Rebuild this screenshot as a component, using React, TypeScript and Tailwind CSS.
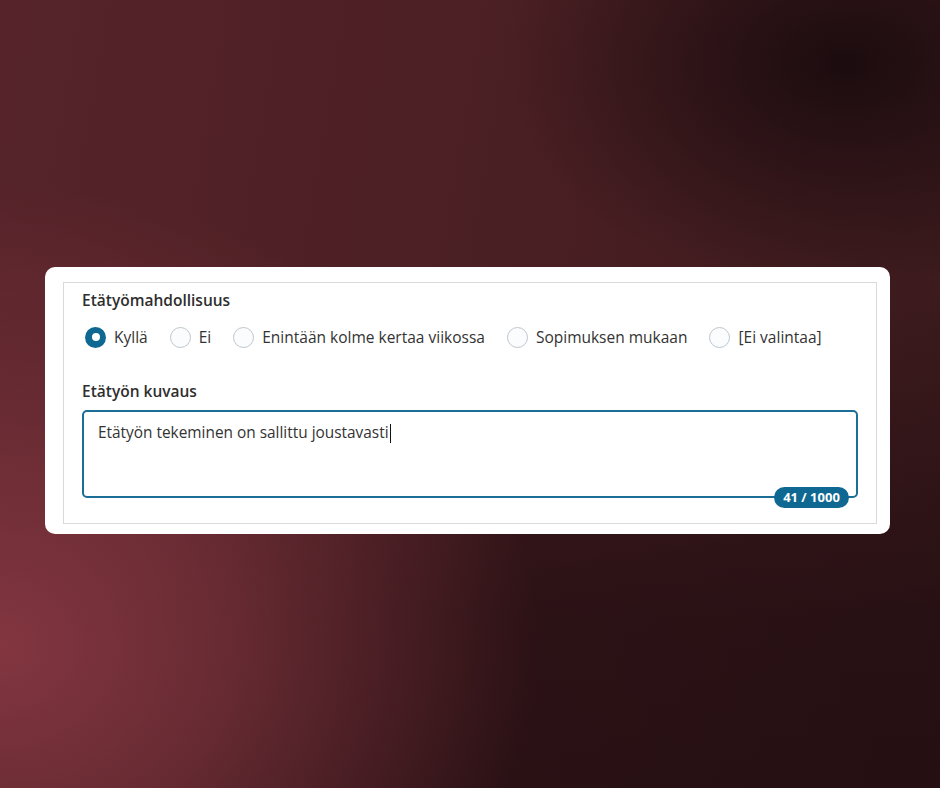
import React from "react";

const options = [
  { label: "Kyllä", checked: true },
  { label: "Ei", checked: false },
  { label: "Enintään kolme kertaa viikossa", checked: false },
  { label: "Sopimuksen mukaan", checked: false },
  { label: "[Ei valintaa]", checked: false },
];

function Radio({ checked }: { checked: boolean }) {
  if (checked) {
    return (
      <span className="flex h-[21px] w-[21px] shrink-0 items-center justify-center rounded-full bg-[#0f6891]">
        <span className="h-[8px] w-[8px] rounded-full bg-white" />
      </span>
    );
  }
  return (
    <span className="h-[21px] w-[21px] shrink-0 rounded-full border border-[#bcc6ce] bg-[#fbfcfd]" />
  );
}

export default function App() {
  return (
    <div
      className="h-[788px] w-[940px] overflow-hidden pl-[45px] pt-[267px] bg-[radial-gradient(ellipse_540px_460px_at_0%_82%,#833640_0%,rgba(131,54,64,0.7)_40%,transparent_100%),radial-gradient(ellipse_340px_230px_at_90%_8%,#1c0c0f_0%,transparent_100%),linear-gradient(to_bottom,transparent_35%,rgba(28,11,14,0.65)_78%,rgba(28,11,14,0.7)_100%),linear-gradient(100deg,#56232a_0%,#4a1f23_50%,#3b1a1d_100%)]"
      style={{ fontFamily: '"Open Sans", "Noto Sans", sans-serif' }}
    >
      <div className="h-[267px] w-[845px] rounded-[10px] bg-white pb-[10px] pl-[18px] pr-[13px] pt-[15px]">
        <div className="flex h-full flex-col border border-[#d9d9d9] px-[18px] pt-[7px]">
          <div className="text-[15.5px] leading-[20px] font-semibold text-[#2e2e2e]">
            Etätyömahdollisuus
          </div>
          <div className="mt-[16px] flex h-[22px] items-center gap-[22px] pl-[3px]">
            {options.map((o) => (
              <div key={o.label} className="flex items-center gap-[8px]">
                <Radio checked={o.checked} />
                <span className="text-[15.5px] leading-[20px] text-[#333]">{o.label}</span>
              </div>
            ))}
          </div>
          <div className="mt-[33px] text-[15.5px] leading-[20px] font-semibold text-[#2e2e2e]">
            Etätyön kuvaus
          </div>
          <div className="relative mt-[9px] h-[88px] rounded-[5px] border-2 border-[#1b6e96] px-[14px] pt-[11px]">
            <div className="flex items-center text-[15.4px] leading-[20px] text-[#333]">
              <span>Etätyön tekeminen on sallittu joustavasti</span>
              <span className="ml-[1px] h-[19px] w-[1.5px] bg-[#111]" />
            </div>
            <span className="absolute -bottom-[12px] right-[7px] flex h-[21px] w-[75px] items-center justify-center rounded-full bg-[#0f6891] text-[13px] font-bold text-white">
              41 / 1000
            </span>
          </div>
        </div>
      </div>
    </div>
  );
}
